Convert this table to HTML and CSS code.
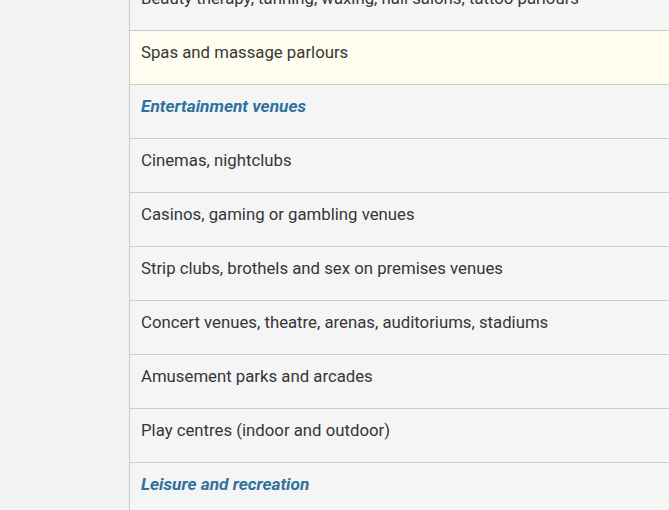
FILE: index.html
```html
<!DOCTYPE html>
<html lang="en">
<head>
<meta charset="utf-8">
<link rel="stylesheet" href="styles.css">
</head>
<body>
<div class="page">
  <div class="side"></div>
  <div class="table">
    <div class="row">Beauty therapy, tanning, waxing, nail salons, tattoo parlours</div>
    <div class="row hl">Spas and massage parlours</div>
    <div class="row head">Entertainment venues</div>
    <div class="row">Cinemas, nightclubs</div>
    <div class="row">Casinos, gaming or gambling venues</div>
    <div class="row">Strip clubs, brothels and sex on premises venues</div>
    <div class="row">Concert venues, theatre, arenas, auditoriums, stadiums</div>
    <div class="row">Amusement parks and arcades</div>
    <div class="row">Play centres (indoor and outdoor)</div>
    <div class="row head">Leisure and recreation</div>
  </div>
</div>
</body>
</html>
```
FILE: styles.css
```css
html, body {
  margin: 0;
  padding: 0;
  background: #f2f2f2;
  overflow: hidden;
}
.page {
  display: flex;
  margin-top: -23px;
  font-family: Roboto, "Liberation Sans", sans-serif;
  font-size: 16.75px;
  color: #363636;
}
.side {
  width: 129px;
  flex: none;
}
.table {
  flex: 1;
  border-left: 1px solid #c8c8c8;
  background: #f5f5f6;
}
.row {
  padding: 9px 11px 20px;
  line-height: 24px;
  border-bottom: 1px solid #cccccc;
  white-space: nowrap;
}
.hl {
  background: #fffdef;
}
.head {
  font-size: 17.25px;
  font-weight: bold;
  font-style: italic;
  color: #2f729e;
}
```
